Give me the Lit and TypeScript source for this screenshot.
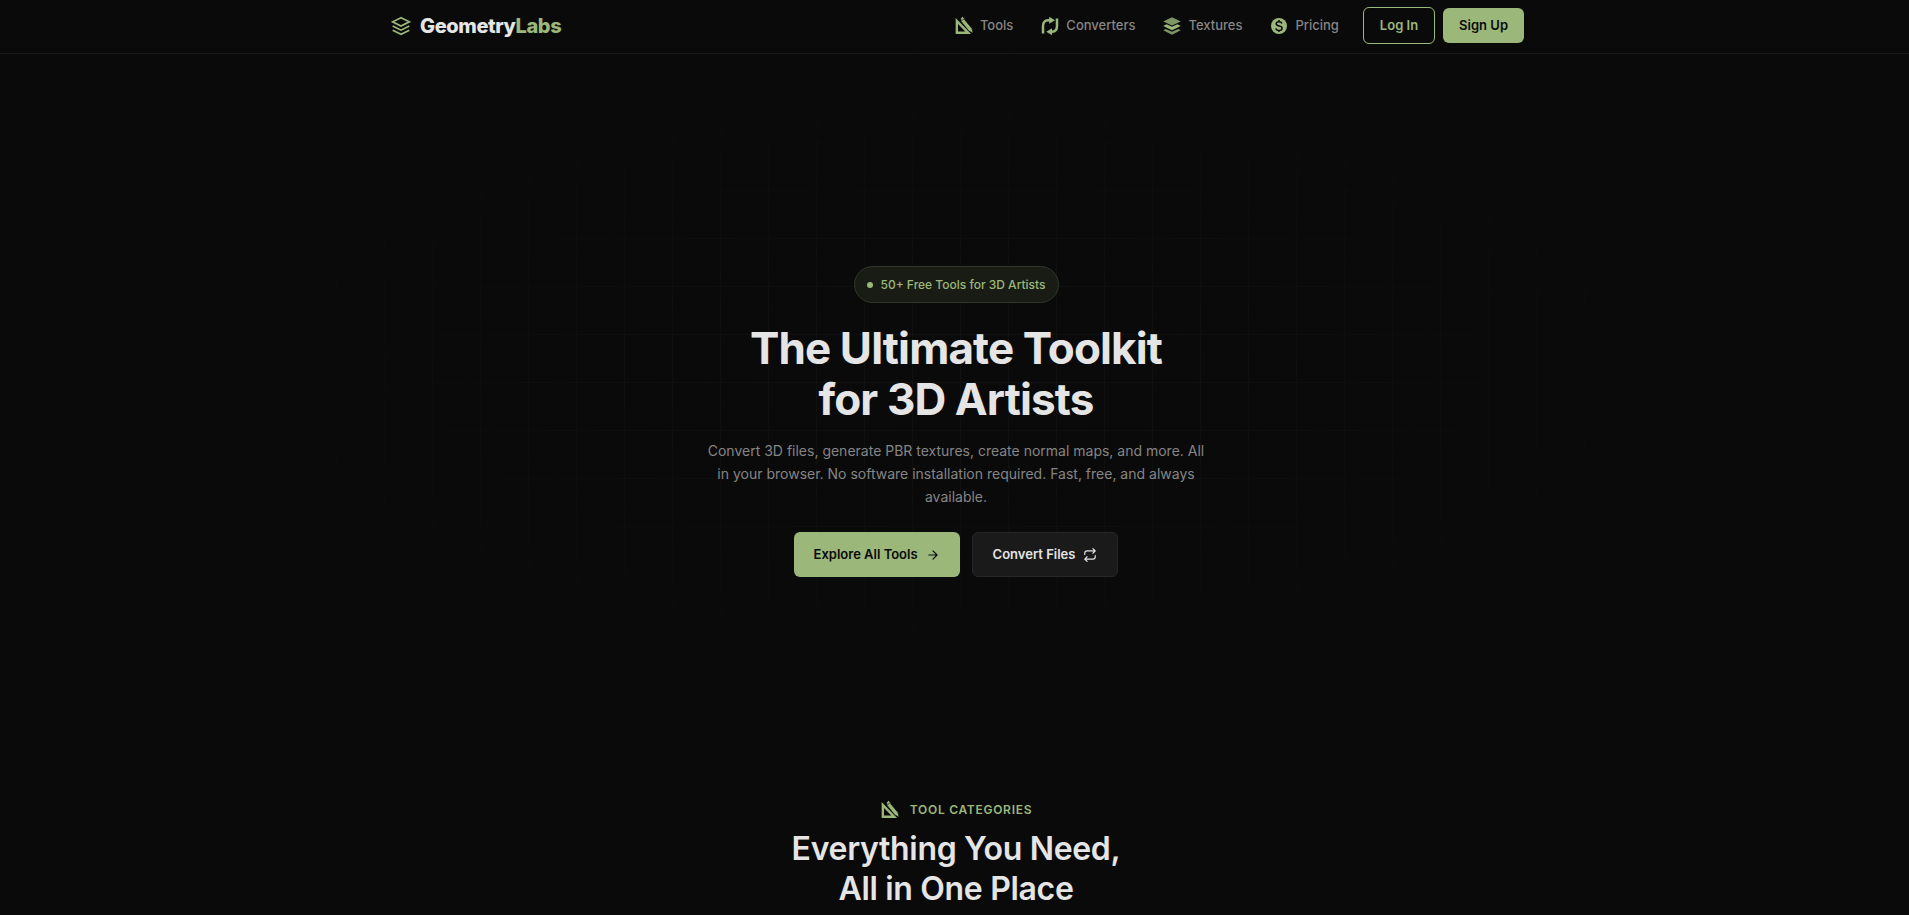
import { LitElement, html, css, svg } from "lit";
import { customElement } from "lit/decorators.js";

const rulerIcon = svg`
  <path fill-rule="evenodd" d="M2 2.400 20.500 21.500H2ZM4.800 9.500v9.200h8.800Z"/>
  <path d="m8 2.600 2.200-2L12.600 3l.2 1.500L21.600 15l1.400 5.600-5.200-2.600L8.600 6.600Z" stroke="#0a0a0a" stroke-width=".8"/>
  <path d="m9 5.800 3.200-2.600" stroke="#0a0a0a" stroke-width=".8"/>`;

const convertIcon = svg`
  <path d="M3.600 21V12c0-4.600 2.400-6.800 6-6.800h2.400" fill="none" stroke="currentColor" stroke-width="3"/>
  <path d="M11 .8 18 5l-7 4.400Z"/>
  <path d="M20.400 3v9c0 4.600-2.400 6.800-6 6.800H13" fill="none" stroke="currentColor" stroke-width="3"/>
  <path d="M14.500 14.600 7.500 18.900l7 4.300Z"/>`;

const textureIcon = svg`
  <path opacity=".8" d="M12 1.500 22.500 6.500 12 11.500 1.500 6.500Z"/>
  <path d="M5.500 10 12 13l6.500-3 4 2L12 17 1.500 12Z"/>
  <path opacity=".8" d="M4.500 15.600 12 19l7.500-3.400 3 1.600L12 22.500 1.500 17.200Z"/>`;

const dollarIcon = svg`
  <circle cx="12" cy="12" r="9.600"/>
  <path d="M15.500 9c-.4-1.500-1.700-2.200-3.500-2.200-2 0-3.400 1-3.400 2.600 0 3.700 7.100 1.600 7.100 5.200 0 1.700-1.600 2.700-3.700 2.700-2 0-3.400-.9-3.800-2.500M12 4.800v2M12 17.300v2" fill="none" stroke="#0a0a0a" stroke-width="1.800"/>`;

const navItems = [
  { label: "Tools", icon: rulerIcon },
  { label: "Converters", icon: convertIcon },
  { label: "Textures", icon: textureIcon },
  { label: "Pricing", icon: dollarIcon },
];

const solid = (shape: unknown) =>
  html`<svg class="icon" viewBox="0 0 24 24" fill="currentColor" aria-hidden="true">${shape}</svg>`;

@customElement("app-root")
export class AppRoot extends LitElement {
  static styles = css`
    :host {
      --accent: #9bb87a;
      --bg: #0a0a0a;
      --text: #e5e5e5;
      --muted: #858585;
      display: block;
      height: 100vh;
      overflow: hidden;
      background: var(--bg);
      color: var(--text);
      font-family: Inter, "Liberation Sans", sans-serif;
      font-size: 13px;
    }
    * { box-sizing: border-box; }
    a { color: inherit; text-decoration: none; }
    .header { border-bottom: 1px solid #1a1a1a; }
    .bar {
      display: flex;
      align-items: center;
      justify-content: space-between;
      max-width: 1139px;
      margin: 0 auto;
      padding: 7px 0 9px;
    }
    .logo {
      display: flex;
      align-items: center;
      gap: 3px;
      font-size: 20px;
      line-height: 24px;
      font-weight: 800;
      letter-spacing: -0.02em;
    }
    .mark { display: grid; place-items: center; width: 32px; color: var(--accent); }
    .mark svg { width: 20px; height: 20px; }
    .labs { color: var(--accent); }
    .menu { display: flex; align-items: center; gap: 24px; }
    .links { display: flex; gap: 27px; }
    .link {
      display: flex;
      align-items: center;
      gap: 6px;
      color: var(--muted);
      line-height: 19px;
      font-weight: 500;
    }
    .icon { width: 20px; height: 20px; color: var(--accent); }
    .auth { display: flex; align-items: center; gap: 8px; }
    .btn {
      font: inherit;
      font-weight: 600;
      line-height: 19px;
      padding: 8px 16px;
      border: 0;
      border-radius: 6px;
      background: var(--accent);
      color: var(--bg);
      cursor: pointer;
    }
    .outline { border: 1px solid var(--accent); background: transparent; color: var(--accent); }
    .hero { position: relative; padding: 212px 24px 167px 27px; text-align: center; }
    .grid {
      position: absolute;
      inset: 0;
      background-image:
        linear-gradient(#121212 1px, transparent 1px),
        linear-gradient(90deg, #121212 1px, transparent 1px);
      background-size: 48px 48px;
      background-position: 0 -8px;
      mask-image: radial-gradient(ellipse 43% 46% at 50% 46%, #000 0%, transparent 100%);
    }
    .content { position: relative; display: flex; flex-direction: column; align-items: center; }
    .pill {
      display: flex;
      align-items: center;
      gap: 8px;
      padding: 8px 12px;
      border: 1px solid #2f3828;
      border-radius: 19px;
      background: #191c15;
      color: var(--accent);
      font-size: 12px;
      line-height: 19px;
      font-weight: 500;
    }
    .dot { width: 6px; height: 6px; border-radius: 50%; background: var(--accent); }
    h1 {
      margin: 20px 0 0;
      font-size: 44px;
      line-height: 51px;
      font-weight: 700;
      letter-spacing: -0.02em;
    }
    .lead {
      max-width: 500px;
      margin: 14px 0 0;
      color: var(--muted);
      font-size: 14px;
      line-height: 23px;
    }
    .actions { display: flex; gap: 12px; margin-top: 24px; }
    .cta { display: flex; align-items: center; gap: 8px; padding: 13px 20px; }
    .cta svg { width: 14px; height: 14px; }
    .dark { padding: 12px 20px; border: 1px solid #262626; background: #1a1a1a; color: var(--text); }
    .categories { padding: 56px 24px 80px 27px; text-align: center; }
    .eyebrow {
      display: flex;
      justify-content: center;
      align-items: center;
      gap: 10px;
      color: var(--accent);
      font-size: 12px;
      line-height: 20px;
      font-weight: 600;
      letter-spacing: 0.06em;
      text-transform: uppercase;
    }
    h2 {
      margin: 9px 0 0;
      font-size: 32px;
      line-height: 40px;
      font-weight: 600;
      letter-spacing: -0.01em;
    }
  `;

  render() {
    return html`
      <header class="header">
        <div class="bar">
          <a class="logo" href="#home">
            <span class="mark">
              <svg viewBox="0 0 24 24" fill="none" stroke="currentColor" stroke-width="2" aria-hidden="true">
                <path d="M12 2 2 7l10 5 10-5Z" /><path d="m2 12 10 5 10-5" /><path d="m2 17 10 5 10-5" />
              </svg>
            </span>
            <span>Geometry<span class="labs">Labs</span></span>
          </a>
          <div class="menu">
            <nav class="links" aria-label="Main">
              ${navItems.map((item) => html`<a class="link" href="#${item.label.toLowerCase()}">${solid(item.icon)}${item.label}</a>`)}
            </nav>
            <div class="auth">
              <button class="btn outline" type="button">Log In</button>
              <button class="btn" type="button">Sign Up</button>
            </div>
          </div>
        </div>
      </header>
      <main>
        <section class="hero">
          <div class="grid"></div>
          <div class="content">
            <div class="pill"><span class="dot"></span>50+ Free Tools for 3D Artists</div>
            <h1>The Ultimate Toolkit<br />for 3D Artists</h1>
            <p class="lead">
              Convert 3D files, generate PBR textures, create normal maps, and more. All in your browser. No software
              installation required. Fast, free, and always available.
            </p>
            <div class="actions">
              <button class="btn cta" type="button">
                Explore All Tools
                <svg viewBox="0 0 24 24" fill="none" stroke="currentColor" stroke-width="2" stroke-linecap="round" stroke-linejoin="round" aria-hidden="true">
                  <path d="M5 12h14M12 5l7 7-7 7" />
                </svg>
              </button>
              <button class="btn cta dark" type="button">
                Convert Files
                <svg viewBox="0 0 24 24" fill="none" stroke="currentColor" stroke-width="2" stroke-linecap="round" stroke-linejoin="round" aria-hidden="true">
                  <path d="m17 1 4 4-4 4M3 11V9a4 4 0 0 1 4-4h14M7 23l-4-4 4-4M21 13v2a4 4 0 0 1-4 4H3" />
                </svg>
              </button>
            </div>
          </div>
        </section>
        <section class="categories">
          <div class="eyebrow">${solid(rulerIcon)}Tool Categories</div>
          <h2>Everything You Need,<br />All in One Place</h2>
        </section>
      </main>
    `;
  }
}
